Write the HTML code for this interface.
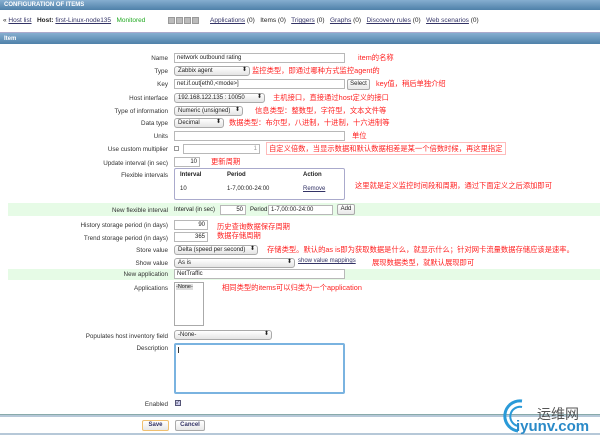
<!DOCTYPE html>
<html><head><meta charset="utf-8"><style>
*{box-sizing:border-box;margin:0;padding:0}
body{width:600px;height:436px;background:#fff;position:relative;overflow:hidden;font-family:"Liberation Sans","Noto Sans CJK SC",sans-serif;font-size:6.5px;color:#222}
.a{position:absolute;white-space:nowrap}
.lbl{position:absolute;right:432px;white-space:nowrap;text-align:right;font-size:6.3px;color:#333}
.in{position:absolute;border:1px solid #b8b8b8;background:#fff;height:10px;font-size:6px;padding:1px 2px;line-height:7px}
.sel{position:absolute;border:1px solid #aaa;border-radius:3px;background:linear-gradient(#fff,#e4e4e4);height:10px;font-size:6px;padding:1px 3px;line-height:7px}
.sel:after{content:"⬍";position:absolute;right:2px;top:0;font-size:6px}
.red{position:absolute;color:#f22;font-size:7.3px;white-space:nowrap}
.bar{position:absolute;left:0;width:600px;background:linear-gradient(#86aed0,#4f81a9);color:#fff;font-weight:bold;font-size:6px;padding-left:4px}
.green{position:absolute;left:8px;width:592px;background:#e6fbe6}
.btn{position:absolute;border:1px solid #aaa;border-radius:2px;background:linear-gradient(#fff,#e8e8e8);font-size:6px;text-align:center;height:11px;line-height:9px}
a{color:#336;text-decoration:underline}
.ic{position:absolute;top:17px;width:7px;height:7px;background:#bbb;border:1px solid #999}
</style></head><body>
<div class="bar" style="top:0;height:10px;line-height:10px">CONFIGURATION OF ITEMS</div>
<div class="a" style="top:17px;left:3px;font-size:6.5px">« <a>Host list</a> &nbsp; <b>Host:</b> <a>first-Linux-node135</a> &nbsp; <span style="color:#2a2">Monitored</span></div>
<div class="ic" style="left:168px"></div><div class="ic" style="left:176px"></div><div class="ic" style="left:184px"></div><div class="ic" style="left:192px"></div>
<div class="a" style="top:17px;left:210px;font-size:6.5px"><a>Applications</a> (0) &nbsp; Items (0) &nbsp; <a>Triggers</a> (0) &nbsp; <a>Graphs</a> (0) &nbsp; <a>Discovery rules</a> (0) &nbsp; <a>Web scenarios</a> (0)</div>
<div class="bar" style="top:32px;height:12px;line-height:12px;border-top:1px solid #aac">Item</div>

<div class="lbl" style="top:55px">Name</div><div class="in" style="top:53px;left:174px;width:171px">network outbound rating</div><div class="red" style="top:53px;left:358px">item的名称</div>
<div class="lbl" style="top:68px">Type</div><div class="sel" style="top:66px;left:174px;width:76px">Zabbix agent</div><div class="red" style="top:66px;left:252px">监控类型，即通过哪种方式监控agent的</div>
<div class="lbl" style="top:81px">Key</div><div class="in" style="top:79px;left:174px;width:171px">net.if.out[eth0,&lt;mode&gt;]</div><div class="btn" style="top:79px;left:347px;width:23px">Select</div><div class="red" style="top:79px;left:376px">key值，稍后单独介绍</div>
<div class="lbl" style="top:95px">Host interface</div><div class="sel" style="top:93px;left:174px;width:91px">192.168.122.135 : 10050</div><div class="red" style="top:93px;left:273px">主机接口，直接通过host定义的接口</div>
<div class="lbl" style="top:108px">Type of information</div><div class="sel" style="top:106px;left:174px;width:69px">Numeric (unsigned)</div><div class="red" style="top:106px;left:255px">信息类型：整数型，字符型，文本文件等</div>
<div class="lbl" style="top:120px">Data type</div><div class="sel" style="top:118px;left:174px;width:50px">Decimal</div><div class="red" style="top:118px;left:229px">数据类型：布尔型，八进制，十进制，十六进制等</div>
<div class="lbl" style="top:133px">Units</div><div class="in" style="top:131px;left:174px;width:171px"></div><div class="red" style="top:131px;left:352px">单位</div>
<div class="lbl" style="top:146px">Use custom multiplier</div><div class="a" style="top:146px;left:174px;width:5px;height:5px;border:1px solid #999"></div><div class="in" style="top:144px;left:183px;width:77px;text-align:right;color:#999">1</div><div class="red" style="top:142px;left:266px;border:1px solid #fbb;padding:0 2px;line-height:11px">自定义倍数，当显示数据和默认数据相差是某一个倍数时候，再这里指定</div>
<div class="lbl" style="top:160px">Update interval (in sec)</div><div class="in" style="top:157px;left:174px;width:26px;text-align:right">10</div><div class="red" style="top:157px;left:211px">更新周期</div>
<div class="lbl" style="top:172px">Flexible intervals</div>
<div class="a" style="top:168px;left:174px;width:171px;height:32px;border:1px solid #aac;border-radius:2px;font-size:6px">
<div class="a" style="top:3px;left:5px;font-weight:bold">Interval</div><div class="a" style="top:3px;left:52px;font-weight:bold">Period</div><div class="a" style="top:3px;left:128px;font-weight:bold">Action</div>
<div class="a" style="top:17px;left:5px">10</div><div class="a" style="top:17px;left:52px">1-7,00:00-24:00</div><div class="a" style="top:17px;left:128px"><a>Remove</a></div></div>
<div class="red" style="top:181px;left:355px">这里就是定义监控时间段和周期，通过下面定义之后添加即可</div>
<div class="green" style="top:203px;height:13px"></div>
<div class="lbl" style="top:207px">New flexible interval</div>
<div class="a" style="top:207px;left:174px;font-size:6px">Interval (in sec)</div><div class="in" style="top:205px;left:220px;width:26px;text-align:right">50</div>
<div class="a" style="top:207px;left:250px;font-size:6px">Period</div><div class="in" style="top:205px;left:268px;width:65px">1-7,00:00-24:00</div><div class="btn" style="top:204px;left:337px;width:18px">Add</div>
<div class="lbl" style="top:222px">History storage period (in days)</div><div class="in" style="top:220px;left:174px;width:34px;text-align:right">90</div><div class="red" style="top:222px;left:217px;line-height:9px">历史查询数据保存周期<br>数据存储周期</div>
<div class="lbl" style="top:235px">Trend storage period (in days)</div><div class="in" style="top:232px;left:174px;width:34px;text-align:right">365</div>
<div class="lbl" style="top:247px">Store value</div><div class="sel" style="top:245px;left:174px;width:84px">Delta (speed per second)</div><div class="red" style="top:245px;left:267px">存储类型。默认的as is即为获取数据是什么，就显示什么；针对网卡流量数据存储应该是速率。</div>
<div class="lbl" style="top:260px">Show value</div><div class="sel" style="top:258px;left:174px;width:121px">As is</div><div class="a" style="top:258px;left:298px;font-size:6px"><a>show value mappings</a></div><div class="red" style="top:258px;left:372px">展现数据类型，就默认展现即可</div>
<div class="green" style="top:269px;height:11px"></div>
<div class="lbl" style="top:271px">New application</div><div class="in" style="top:269px;left:174px;width:171px">NetTraffic</div>
<div class="lbl" style="top:285px">Applications</div><div class="a" style="top:282px;left:174px;width:30px;height:44px;border:1px solid #aaa;font-size:5.5px;padding:1px"><span style="background:#ddd">-None-</span></div><div class="red" style="top:283px;left:222px">相同类型的items可以归类为一个application</div>
<div class="lbl" style="top:333px">Populates host inventory field</div><div class="sel" style="top:330px;left:174px;width:98px">-None-</div>
<div class="lbl" style="top:345px">Description</div><div class="a" style="top:343px;left:174px;width:171px;height:51px;border:2px solid #7ab3e0;border-radius:2px"><div class="a" style="top:2px;left:2px;width:1px;height:6px;background:#333"></div></div>
<div class="lbl" style="top:401px">Enabled</div><div class="a" style="top:400px;left:175px;width:6px;height:6px;border:1px solid #557;background:#cce;font-size:5px;line-height:4px">✓</div>
<div class="a" style="top:414px;left:0;width:600px;height:3px;background:#b6c8d8;border-top:1px solid #8aa"></div>
<div class="btn" style="top:420px;left:142px;width:27px;border-color:#f0c070;font-weight:bold;color:#336">Save</div>
<div class="btn" style="top:420px;left:175px;width:30px;font-weight:bold;color:#336">Cancel</div>
<div class="a" style="top:433px;left:0;width:600px;height:2px;background:#b6c8d8"></div>
<svg class="a" style="top:398px;left:500px" width="30" height="36" viewBox="0 0 30 36"><path d="M22 3 A15 15 0 1 0 18 33" fill="none" stroke="#2a9ad8" stroke-width="3"/><path d="M22 9 A9 9 0 1 0 18 28" fill="none" stroke="#2a9ad8" stroke-width="2"/></svg>
<div class="a" style="top:404px;left:537px;font-size:14px;color:#555">运维网</div>
<div class="a" style="top:418px;left:516px;font-size:15px;font-weight:bold;color:#2a8ac8">iyunv.com</div>
</body></html>
